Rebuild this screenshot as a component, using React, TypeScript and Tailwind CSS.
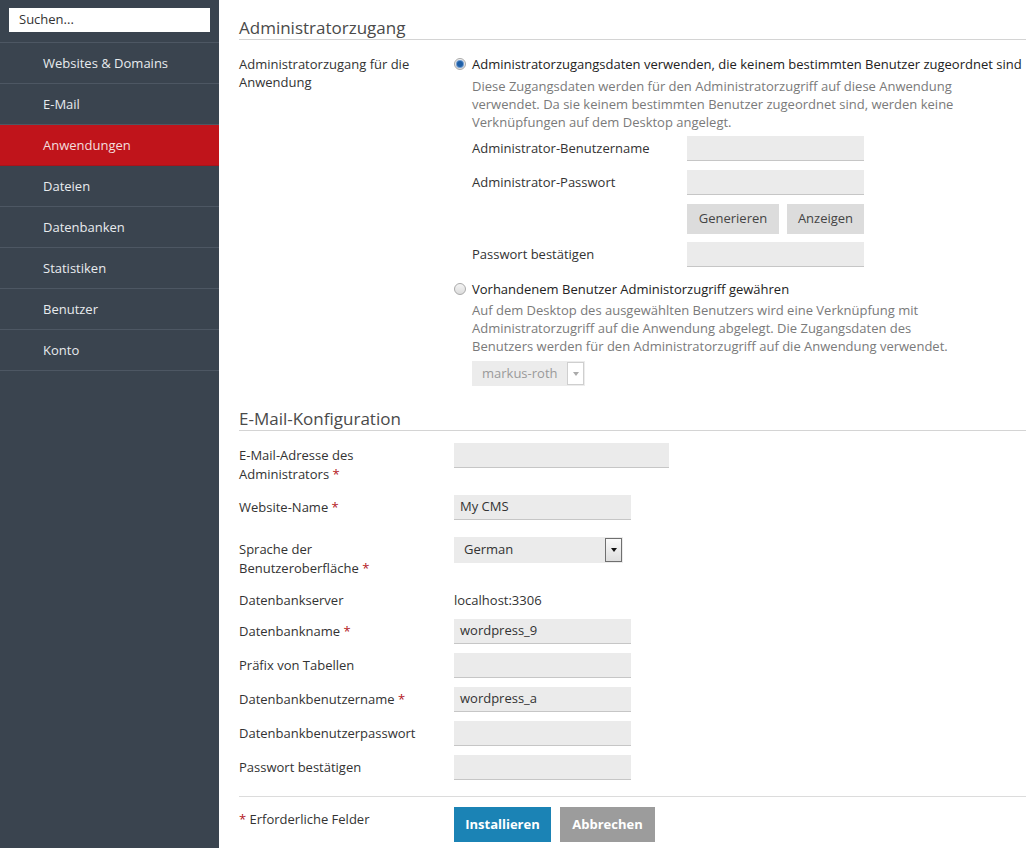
import React from 'react';

const navItems = [
  'Websites & Domains',
  'E-Mail',
  'Anwendungen',
  'Dateien',
  'Datenbanken',
  'Statistiken',
  'Benutzer',
  'Konto',
];

function Sidebar() {
  return (
    <aside className="w-[219px] shrink-0 bg-[#3a444f] min-h-[848px]">
      <div className="px-[9px] pt-[8px] pb-[10px] border-b border-[#4d5763]">
        <div className="h-[24px] bg-white flex items-center pl-[10px] text-[13px] text-[#333]">Suchen...</div>
      </div>
      {navItems.map((item) => (
        <div
          key={item}
          className={
            item === 'Anwendungen'
              ? 'h-[41px] flex items-center pl-[43px] pt-[1px] text-[13px] bg-[#c0141b] text-[#f3dede] border-b border-[#a8141a]'
              : 'h-[41px] flex items-center pl-[43px] pt-[1px] text-[13px] text-[#e8ebee] border-b border-[#4d5763]'
          }
        >
          {item}
        </div>
      ))}
    </aside>
  );
}

function Input({ value, width = 'w-[177px]' }: { value?: string; width?: string }) {
  return (
    <div className={`${width} h-[25px] bg-[#ebebeb] border-b border-[#c6c6c6] flex items-center px-[6px] text-[13px] text-[#333]`}>
      {value}
    </div>
  );
}

function Star() {
  return <span className="text-[#b3161c]">&nbsp;*</span>;
}

function Radio({ checked }: { checked?: boolean }) {
  return (
    <span className="w-[12px] h-[12px] mt-[3px] rounded-full border border-[#a9a9a9] bg-gradient-to-b from-[#f4f4f4] to-[#dcdcdc] flex items-center justify-center shrink-0">
      {checked && <span className="w-[6px] h-[6px] rounded-full bg-[#1f5fa6] ring-1 ring-[#6c9ad0]" />}
    </span>
  );
}

function SectionHeading({ title }: { title: string }) {
  return (
    <h2 className="text-[17px] leading-[22px] text-[#4a4a4a] border-b border-[#d4d4d4]">{title}</h2>
  );
}

function Row({
  label,
  children,
  className = '',
}: {
  label: React.ReactNode;
  children: React.ReactNode;
  className?: string;
}) {
  return (
    <div className={`flex items-start ${className}`}>
      <div className="w-[215px] shrink-0 pr-[22px] pt-[3px] leading-[19px] text-[13px] text-[#333]">{label}</div>
      <div className="flex-1">{children}</div>
    </div>
  );
}

export default function App() {
  return (
    <div className="flex w-[1026px] min-h-[848px] bg-white" style={{ fontFamily: '"Open Sans", "Liberation Sans", sans-serif' }}>
      <Sidebar />
      <main className="flex-1 pl-[20px] pt-[17px]">
        <SectionHeading title="Administratorzugang" />

        <div className="flex items-start mt-[15px]">
          <div className="w-[215px] shrink-0 pr-[22px] leading-[18px] text-[13px] text-[#333]">
            Administratorzugang für die Anwendung
          </div>
          <div className="flex-1">
            <div className="flex items-start gap-[6px] leading-[18px] text-[13px] text-[#222]">
              <Radio checked />
              <span>Administratorzugangsdaten verwenden, die keinem bestimmten Benutzer zugeordnet sind</span>
            </div>
            <div className="pl-[18px]">
              <p className="mt-[4px] w-[500px] leading-[18px] text-[13px] text-[#7a7a7a]">
                Diese Zugangsdaten werden für den Administratorzugriff auf diese Anwendung verwendet. Da sie keinem bestimmten Benutzer zugeordnet sind, werden keine Verknüpfungen auf dem Desktop angelegt.
              </p>
              <div className="mt-[5px] flex flex-col">
                <div className="flex items-center">
                  <div className="w-[215px] text-[13px] text-[#333]">Administrator-Benutzername</div>
                  <Input />
                </div>
                <div className="flex items-center mt-[9px]">
                  <div className="w-[215px] text-[13px] text-[#333]">Administrator-Passwort</div>
                  <Input />
                </div>
                <div className="flex items-center mt-[9px] pl-[215px] gap-[8px]">
                  <button className="h-[30px] w-[92px] bg-[#dcdcdc] text-[13px] text-[#444]">Generieren</button>
                  <button className="h-[30px] w-[77px] bg-[#dcdcdc] text-[13px] text-[#444]">Anzeigen</button>
                </div>
                <div className="flex items-center mt-[8px]">
                  <div className="w-[215px] text-[13px] text-[#333]">Passwort bestätigen</div>
                  <Input />
                </div>
              </div>
            </div>

            <div className="flex items-start gap-[6px] leading-[18px] text-[13px] text-[#222] mt-[13px]">
              <Radio />
              <span>Vorhandenem Benutzer Administorzugriff gewähren</span>
            </div>
            <div className="pl-[18px]">
              <p className="mt-[3px] w-[490px] leading-[18px] text-[13px] text-[#7a7a7a]">
                Auf dem Desktop des ausgewählten Benutzers wird eine Verknüpfung mit Administratorzugriff auf die Anwendung abgelegt. Die Zugangsdaten des Benutzers werden für den Administratorzugriff auf die Anwendung verwendet.
              </p>
              <div className="mt-[6px] w-[113px] h-[25px] bg-[#ececec] flex items-center justify-between">
                <span className="pl-[10px] text-[13px] text-[#9a9a9a]">markus-roth</span>
                <span className="w-[17px] h-[23px] mr-[1px] bg-white border border-[#cfcfcf] flex items-center justify-center">
                  <span className="w-0 h-0 border-l-[3px] border-r-[3px] border-t-[4px] border-l-transparent border-r-transparent border-t-[#aaa]" />
                </span>
              </div>
            </div>
          </div>
        </div>

        <div className="mt-[22px]">
          <SectionHeading title="E-Mail-Konfiguration" />
        </div>

        <Row className="mt-[12px]" label={<>E-Mail-Adresse des Administrators<Star /></>}>
          <Input width="w-[215px]" />
        </Row>
        <Row className="mt-[11px]" label={<>Website-Name<Star /></>}>
          <Input value="My CMS" />
        </Row>
        <Row className="mt-[17px]" label={<>Sprache der Benutzeroberfläche<Star /></>}>
          <div className="w-[169px] h-[26px] bg-[#ebebeb] flex items-center justify-between">
            <span className="pl-[10px] text-[13px] text-[#333]">German</span>
            <span className="w-[17px] h-[24px] mr-[1px] border border-[#6f6f6f] bg-gradient-to-b from-[#fafafa] to-[#dedede] flex items-center justify-center">
              <span className="w-0 h-0 border-l-[3px] border-r-[3px] border-t-[4px] border-l-transparent border-r-transparent border-t-[#111]" />
            </span>
          </div>
        </Row>
        <Row className="mt-[10px]" label="Datenbankserver">
          <div className="pt-[3px] leading-[19px] text-[13px] text-[#333]">localhost:3306</div>
        </Row>
        <Row className="mt-[9px]" label={<>Datenbankname<Star /></>}>
          <Input value="wordpress_9" />
        </Row>
        <Row className="mt-[9px]" label="Präfix von Tabellen">
          <Input />
        </Row>
        <Row className="mt-[9px]" label={<>Datenbankbenutzername<Star /></>}>
          <Input value="wordpress_a" />
        </Row>
        <Row className="mt-[9px]" label="Datenbankbenutzerpasswort">
          <Input />
        </Row>
        <Row className="mt-[9px]" label="Passwort bestätigen">
          <Input />
        </Row>

        <div className="mt-[16px] border-t border-[#dcdcdc] pt-[10px] flex items-start">
          <div className="w-[215px] shrink-0 pt-[3px] leading-[19px] text-[13px] text-[#333]">
            <span className="text-[#b3161c]">*</span> Erforderliche Felder
          </div>
          <div className="flex gap-[9px]">
            <button className="h-[35px] w-[97px] bg-[#1b83b5] text-white text-[13px] font-bold">Installieren</button>
            <button className="h-[35px] w-[95px] bg-[#9c9c9c] text-white text-[13px] font-bold">Abbrechen</button>
          </div>
        </div>
      </main>
    </div>
  );
}
